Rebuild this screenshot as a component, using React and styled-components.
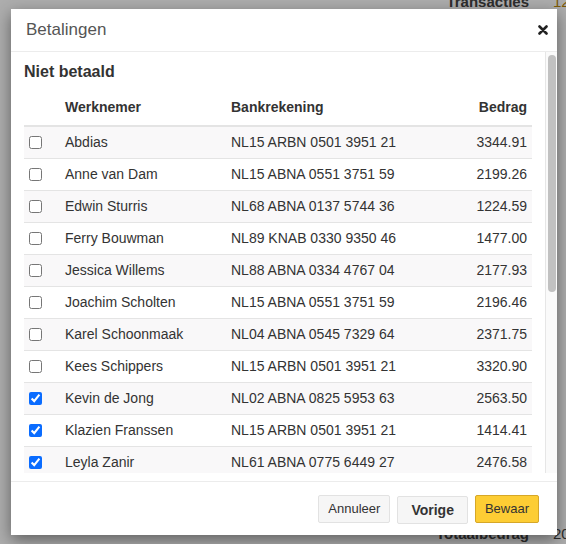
import React from 'react';
import styled, { createGlobalStyle } from 'styled-components';

const GlobalStyle = createGlobalStyle`
  html, body {
    margin: 0;
    padding: 0;
  }
  body {
    font-family: "Liberation Sans", Arial, Helvetica, sans-serif;
    color: #333;
  }
`;

const Page = styled.div`
  position: relative;
  width: 566px;
  height: 544px;
  overflow: hidden;
  background: #fff;
`;

const BackSummary = styled.div`
  display: flex;
  flex-direction: column;
  justify-content: space-between;
  margin-top: -8px;
  height: calc(100% + 8px);
`;

const BackRow = styled.div`
  display: flex;
  justify-content: flex-end;
  gap: 24px;
  font-size: 15px;
  line-height: 20px;
  margin-right: -8px;
`;

const BackLabel = styled.span`
  font-weight: bold;
  color: #444;
`;

const BackValue = styled.span`
  width: 21px;
  color: ${(p) => (p.$gold ? '#b8860b' : '#444')};
`;

const Backdrop = styled.div`
  position: absolute;
  inset: 0;
  background: rgba(0, 0, 0, 0.32);
  display: flex;
  padding: 9px 9px 9px 11px;
`;

const Modal = styled.div`
  flex: 1;
  display: flex;
  flex-direction: column;
  background: #fff;
  box-shadow: 0 5px 15px rgba(0, 0, 0, 0.45);
  min-height: 0;
`;

const Header = styled.div`
  display: flex;
  align-items: center;
  justify-content: space-between;
  height: 42px;
  padding: 0 8px 0 15px;
  border-bottom: 1px solid #ececec;
  flex-shrink: 0;
`;

const Title = styled.h4`
  margin: 0;
  font-size: 17px;
  font-weight: normal;
  color: #555;
`;

const CloseButton = styled.button`
  display: flex;
  align-items: center;
  justify-content: center;
  width: 12px;
  height: 12px;
  padding: 0;
  border: 0;
  background: none;
  cursor: pointer;
`;

const BodyWrap = styled.div`
  flex: 1;
  min-height: 0;
  display: flex;
  padding-bottom: 8px;
`;

const Scroll = styled.div`
  flex: 1;
  overflow: hidden;
  padding: 10px 3px 0 13px;
`;

const ScrollRail = styled.div`
  width: 8px;
  flex-shrink: 0;
  padding: 3px 1px 0 2px;
  background: #fafafa;
  border-left: 1px solid #e6e6e6;
`;

const ScrollThumb = styled.div`
  height: 237px;
  border-radius: 4px;
  background: #c1c1c1;
`;

const SectionTitle = styled.h3`
  margin: 0 0 7px;
  font-size: 16px;
  line-height: 20px;
  font-weight: bold;
  color: #333;
`;

const Table = styled.table`
  width: 508px;
  border-collapse: collapse;
  table-layout: fixed;
  font-size: 14px;
`;

const HeadCell = styled.th`
  padding: 8px 8px;
  line-height: 20px;
  font-weight: bold;
  text-align: ${(p) => (p.$right ? 'right' : 'left')};
  padding-right: ${(p) => (p.$right ? '5px' : '8px')};
  border-bottom: 2px solid #e4e4e4;
  color: #333;
`;

const Row = styled.tr`
  background: ${(p) => (p.$striped ? '#f9f8f9' : '#fff')};
`;

const Cell = styled.td`
  padding: 6px 8px;
  line-height: 19px;
  border-top: 1px solid #e4e4e4;
  text-align: ${(p) => (p.$right ? 'right' : 'left')};
  padding-right: ${(p) => (p.$right ? '5px' : '8px')};
  color: #333;
  white-space: nowrap;
`;

const CheckCell = styled.td`
  padding: 0 0 0 5px;
  border-top: 1px solid #e4e4e4;
  vertical-align: middle;
`;

const Check = styled.input`
  display: block;
  width: 13px;
  height: 13px;
  margin: 0;
  accent-color: #0a6cff;
`;

const Footer = styled.div`
  display: flex;
  justify-content: flex-end;
  align-items: center;
  gap: 7px;
  height: 53px;
  padding-right: 18px;
  border-top: 1px solid #ececec;
  flex-shrink: 0;
`;

const Button = styled.button`
  height: 28px;
  padding: 0 ${(p) => p.$pad || 9}px;
  font-family: inherit;
  font-size: ${(p) => (p.$bold ? '14px' : '13px')};
  font-weight: ${(p) => (p.$bold ? 'bold' : 'normal')};
  color: #333;
  background: ${(p) => (p.$primary ? '#fdcd34' : '#f6f6f6')};
  border: 1px solid ${(p) => (p.$primary ? '#d6a728' : '#e2e2e2')};
  border-radius: 2px;
  margin-top: ${(p) => (p.$bold ? '2px' : '0')};
  cursor: pointer;
`;

const employees = [
  ['Abdias', 'NL15 ARBN 0501 3951 21', '3344.91', false],
  ['Anne van Dam', 'NL15 ABNA 0551 3751 59', '2199.26', false],
  ['Edwin Sturris', 'NL68 ABNA 0137 5744 36', '1224.59', false],
  ['Ferry Bouwman', 'NL89 KNAB 0330 9350 46', '1477.00', false],
  ['Jessica Willems', 'NL88 ABNA 0334 4767 04', '2177.93', false],
  ['Joachim Scholten', 'NL15 ABNA 0551 3751 59', '2196.46', false],
  ['Karel Schoonmaak', 'NL04 ABNA 0545 7329 64', '2371.75', false],
  ['Kees Schippers', 'NL15 ARBN 0501 3951 21', '3320.90', false],
  ['Kevin de Jong', 'NL02 ABNA 0825 5953 63', '2563.50', true],
  ['Klazien Franssen', 'NL15 ARBN 0501 3951 21', '1414.41', true],
  ['Leyla Zanir', 'NL61 ABNA 0775 6449 27', '2476.58', true],
  ['Lisa de Vries', 'NL37 RABO 0312 4470 18', '1987.40', true],
  ['Mark Jansen', 'NL21 INGB 0006 5821 93', '2840.12', true],
  ['Nina Bakker', 'NL54 ABNA 0441 2267 80', '1652.75', true],
];

const CloseIcon = () => (
  <svg width="10" height="10" viewBox="0 0 10 10">
    <path d="M1.5 1.5 L8.5 8.5 M8.5 1.5 L1.5 8.5" stroke="#222" strokeWidth="2.6" strokeLinecap="round" />
  </svg>
);

const App = () => {
  return (
    <Page>
      <GlobalStyle />
      <BackSummary>
        <BackRow>
          <BackLabel>Transacties</BackLabel>
          <BackValue $gold>12</BackValue>
        </BackRow>
        <BackRow>
          <BackLabel>Totaalbedrag</BackLabel>
          <BackValue>20</BackValue>
        </BackRow>
      </BackSummary>

      <Backdrop>
        <Modal>
          <Header>
            <Title>Betalingen</Title>
            <CloseButton aria-label="Sluiten">
              <CloseIcon />
            </CloseButton>
          </Header>

          <BodyWrap>
            <Scroll>
              <SectionTitle>Niet betaald</SectionTitle>
              <Table>
                <colgroup>
                  <col style={{ width: '33px' }} />
                  <col style={{ width: '166px' }} />
                  <col style={{ width: '200px' }} />
                  <col />
                </colgroup>
                <thead>
                  <tr>
                    <HeadCell />
                    <HeadCell>Werknemer</HeadCell>
                    <HeadCell>Bankrekening</HeadCell>
                    <HeadCell $right>Bedrag</HeadCell>
                  </tr>
                </thead>
                <tbody>
                  {employees.map(([name, iban, amount, checked], i) => (
                    <Row key={name} $striped={i % 2 === 0}>
                      <CheckCell>
                        <Check type="checkbox" defaultChecked={checked} />
                      </CheckCell>
                      <Cell>{name}</Cell>
                      <Cell>{iban}</Cell>
                      <Cell $right>{amount}</Cell>
                    </Row>
                  ))}
                </tbody>
              </Table>
            </Scroll>
            <ScrollRail>
              <ScrollThumb />
            </ScrollRail>
          </BodyWrap>

          <Footer>
            <Button $pad={9}>Annuleer</Button>
            <Button $bold $pad={13}>Vorige</Button>
            <Button $primary $pad={9}>Bewaar</Button>
          </Footer>
        </Modal>
      </Backdrop>
    </Page>
  );
};

export default App;
